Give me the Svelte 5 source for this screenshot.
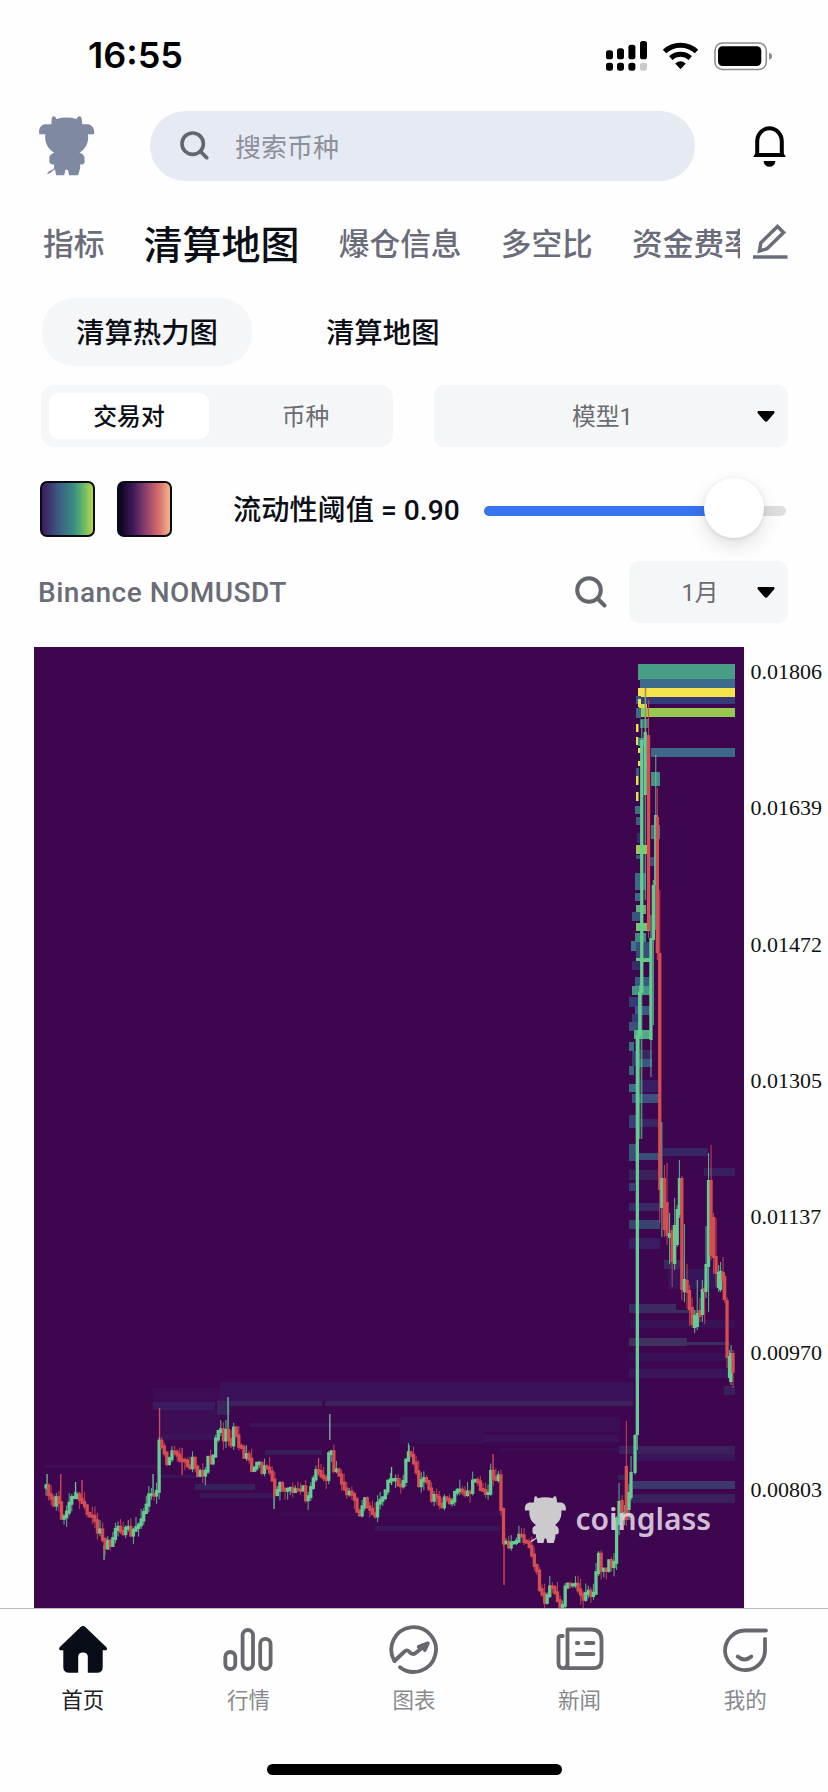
<script lang="ts">
	type Point = [number, number];
	type Band = [number, number, number, number, string];
	interface Candle {
		x: number;
		high: number;
		top: number;
		bottom: number;
		low: number;
		up: boolean;
	}

	const topics = ['指标', '清算地图', '爆仓信息', '多空比', '资金费率'];
	const prices = ['0.01806', '0.01639', '0.01472', '0.01305', '0.01137', '0.00970', '0.00803'];
	const navItems = ['首页', '行情', '图表', '新闻', '我的'];

	let topic = $state('清算地图');
	let nav = $state('首页');
	let threshold = $state(0.9);

	// close prices of the quiet part of the month, in chart units
	const closes: Point[] = [
		[45, 1487], [48, 1491], [52, 1503], [54, 1505], [57, 1496], [60, 1507], [62, 1522], [66, 1515],
		[68, 1508], [71, 1495], [75, 1496], [80, 1497], [85, 1507], [90, 1517], [93, 1515], [98, 1533],
		[101, 1528], [103, 1542], [104, 1552], [107, 1542], [110, 1547], [113, 1538], [117, 1528],
		[122, 1533], [127, 1525], [131, 1536], [136, 1527], [140, 1520], [145, 1510], [148, 1495],
		[152, 1492], [155, 1497], [157.5, 1490], [159, 1440], [163, 1448], [166, 1463], [168, 1464],
		[173, 1451], [177, 1457], [182, 1460], [186, 1462], [190, 1468], [193, 1458], [197, 1478],
		[200, 1473], [204, 1479], [207, 1458], [212, 1468], [215, 1440], [218, 1433], [221, 1430],
		[223, 1442], [227, 1427], [230, 1453], [234, 1428], [238, 1445], [242, 1450], [245, 1460],
		[248, 1452], [250, 1470], [255, 1468], [259, 1462], [261, 1477], [266, 1463], [269, 1478],
		[271, 1460], [273, 1495], [275, 1492], [280, 1485], [283, 1490], [290, 1487], [297, 1493],
		[303, 1488], [307, 1503], [311, 1488], [316, 1468], [320, 1475], [326, 1478], [328, 1466],
		[330, 1435], [333, 1473], [338, 1472], [343, 1488], [348, 1493], [352, 1492], [357, 1510],
		[361, 1514], [364, 1500], [368, 1507], [374, 1518], [377, 1505], [382, 1498], [387, 1485],
		[392, 1477], [397, 1483], [403, 1485], [407, 1450], [412, 1455], [415, 1467], [418, 1486],
		[423, 1475], [427, 1482], [432, 1500], [435, 1497], [442, 1507], [445, 1493], [451, 1506],
		[455, 1492], [458, 1487], [463, 1495], [470, 1493], [473, 1478], [477, 1480], [482, 1493],
		[488, 1492], [490, 1468], [494, 1480], [499, 1477], [501, 1512], [503, 1540], [508, 1545],
		[513, 1542], [520, 1537], [528, 1542], [532, 1558], [537, 1573], [540, 1593], [546, 1602],
		[548, 1590], [552, 1585], [555, 1595], [560, 1607], [563, 1607], [565, 1587], [570, 1583],
		[575, 1585], [580, 1590], [583, 1600], [587, 1592], [593, 1595], [596, 1572], [598, 1553],
		[602, 1572], [606, 1570], [608, 1560], [612, 1567], [615, 1560], [616, 1527], [618, 1502]
	];

	// the pump and what followed: x, high, body top, body bottom, low, rising
	const spike: [number, number, number, number, number, 0 | 1][] = [
		[619, 1483, 1501, 1525, 1535, 1], [622, 1495, 1500, 1517, 1520, 0], [624.5, 1505, 1512, 1520, 1525, 1],
		[626.3, 1421, 1466, 1520, 1526, 0], [629, 1484, 1492, 1510, 1520, 1], [631, 1456, 1472, 1498, 1500, 1],
		[635, 1434, 1435, 1473, 1475, 1], [637.3, 1030, 1035, 1435, 1450, 1], [639.7, 985, 992, 1036, 1139, 1],
		[641.7, 720, 740, 993, 1139, 1], [645.2, 690, 732, 795, 900, 1], [648.5, 700, 735, 930, 938, 0],
		[650.9, 915, 938, 1040, 1077, 1], [653.3, 880, 885, 940, 1025, 1], [655.7, 755, 815, 885, 930, 1],
		[657.3, 788, 817, 953, 960, 0], [659.7, 890, 953, 1190, 1223, 0], [661.8, 1122, 1178, 1208, 1237, 1],
		[664.4, 1165, 1178, 1230, 1237, 0], [667, 1163, 1202, 1236, 1245, 0], [669.5, 1213, 1233, 1238, 1264, 1],
		[672.1, 1225, 1230, 1262, 1287, 0], [674.6, 1198, 1225, 1264, 1270, 1], [677.2, 1205, 1209, 1245, 1247, 1],
		[679.4, 1160, 1178, 1215, 1218, 1], [681.8, 1176, 1178, 1290, 1300, 0], [684.4, 1224, 1279, 1292, 1302, 1],
		[687, 1264, 1280, 1293, 1309, 0], [689.5, 1285, 1290, 1310, 1326, 0], [692.1, 1298, 1307, 1325, 1328, 0],
		[694.6, 1310, 1315, 1328, 1333, 1], [697.2, 1280, 1313, 1327, 1330, 1], [699.8, 1298, 1310, 1317, 1322, 0],
		[702.3, 1280, 1289, 1315, 1322, 1], [704.6, 1284, 1288, 1292, 1324, 0], [706, 1226, 1264, 1292, 1298, 1],
		[708.5, 1153, 1180, 1267, 1312, 1], [711, 1145, 1180, 1256, 1260, 0], [713.5, 1213, 1217, 1258, 1274, 0],
		[716, 1218, 1256, 1274, 1287, 0], [718.6, 1265, 1272, 1288, 1292, 1], [720.5, 1262, 1271, 1290, 1292, 1],
		[723, 1257, 1272, 1281, 1300, 0], [724.6, 1273, 1276, 1300, 1303, 0], [727, 1297, 1300, 1358, 1368, 0],
		[729.5, 1350, 1356, 1378, 1382, 1], [731, 1345, 1353, 1382, 1385, 1], [733, 1350, 1353, 1373, 1388, 0]
	];

	// single long wicks: x, y from, y to, colour
	const wicks: [number, number, number, string][] = [
		[47, 1474, 1490, '#64cb96'], [60.7, 1474, 1500, '#d94c55'], [75.5, 1482, 1498, '#64cb96'],
		[82, 1480, 1500, '#d94c55'], [104, 1545, 1560, '#64cb96'], [153, 1474, 1495, '#64cb96'],
		[159.5, 1408, 1440, '#d94c55'], [182, 1448, 1475, '#d94c55'], [228, 1397, 1430, '#64cb96'],
		[274, 1490, 1509, '#64cb96'], [318.5, 1458, 1475, '#d94c55'], [329.8, 1414, 1440, '#7fb6ad'],
		[391.5, 1467, 1485, '#64cb96'], [409, 1445, 1460, '#64cb96'], [493, 1454, 1480, '#d94c55'],
		[504, 1540, 1585, '#d94c55'], [645.5, 688, 735, '#d94c55']
	];

	// liquidation levels: x, y, width, height, colour
	const bands: Band[] = [
		[45, 1465, 115, 3, '#3e0f55'], [153, 1388, 70, 15, '#3e0c55'], [153, 1402, 62, 8, '#3c1a5f'],
		[220, 1382, 413, 19, '#3b125a'], [217, 1401, 105, 5, '#3c215d'], [325, 1401, 308, 5, '#3c215d'],
		[158, 1410, 62, 30, '#3d0d55'], [217, 1405, 13, 10, '#39245f'], [250, 1423, 150, 4, '#3b145a'],
		[400, 1417, 220, 15, '#3b0e56'], [400, 1432, 84, 12, '#3b0f57'], [484, 1435, 135, 7, '#3b1158'],
		[163, 1434, 57, 6, '#3c1258'], [265, 1450, 57, 5, '#391d5b'], [195, 1484, 60, 6, '#37215c'],
		[200, 1493, 75, 5, '#3a1557'], [280, 1512, 220, 4, '#3c0d55'], [375, 1526, 125, 5, '#3a1559'],
		[160, 1475, 40, 3, '#3a1659'], [500, 1448, 118, 3, '#3c0d56'],
		[638, 664, 97, 16, '#479d86'], [640, 679, 95, 9, '#3c6b8c'], [638, 688, 97, 9, '#f4e34c'],
		[638, 697, 97, 7, '#363c78'], [640, 708, 95, 9, '#97c951'], [651, 748, 84, 9, '#3d6887'],
		[636, 696, 5, 8, '#355a82'], [638, 699, 3, 8, '#efe44c'], [639, 704, 8, 4, '#d2db4f'],
		[636, 708, 5, 10, '#3d6887'], [640, 719, 9, 9, '#3c7b84'], [636, 724, 2.5, 8, '#eadf4d'],
		[636, 737, 2.5, 8, '#eadf4d'], [638, 738, 7, 8, '#3c8788'], [638, 748, 3, 5, '#eadf4d'],
		[638, 761, 3, 5, '#eadf4d'], [636, 768, 3, 8, '#3b5c80'], [636, 776, 2.5, 9, '#eadf4d'],
		[651, 772, 9, 14, '#478e87'], [636, 792, 2.5, 9, '#eadf4d'], [635, 806, 6, 8, '#3d7182'],
		[636, 817, 4, 8, '#3d5c80'], [651, 825, 9, 14, '#3f7581'], [637, 833, 4, 10, '#372b6c'],
		[636, 845, 11, 9, '#9fc852'], [636, 855, 5, 4, '#385b80'], [650, 857, 8, 9, '#3b517d'],
		[635, 873, 11, 17, '#3d6986'], [635, 893, 5, 8, '#3d6986'], [636, 905, 10, 9, '#66ae79'],
		[632, 912, 9, 9, '#3b547b'], [636, 923, 14, 8, '#78c36e'], [635, 933, 11, 9, '#438b7f'],
		[631, 941, 6, 10, '#3f7685'], [636, 942, 16, 16, '#394c7c'], [636, 958, 16, 4, '#61c979'],
		[632, 961, 9, 9, '#372b6c'], [635, 977, 16, 9, '#395a80'], [632, 986, 20, 9, '#459783'],
		[629, 997, 10, 10, '#363c78'], [635, 1006, 15, 9, '#3e5887'], [632, 1014, 7, 12, '#343c79'],
		[629, 1022, 9, 9, '#3b527f'], [634, 1030, 17, 9, '#4eab85'], [629, 1042, 5, 9, '#3e6e83'],
		[632, 1051, 9, 15, '#383b74'], [639, 1050, 13, 9, '#392664'], [639, 1059, 13, 8, '#38587f'],
		[629, 1066, 5, 9, '#3d6282'], [629, 1084, 7, 8, '#3c6f89'], [640, 1080, 18, 12, '#391d63'],
		[632, 1094, 27, 9, '#3c527e'], [629, 1115, 7, 13, '#393e78'], [640, 1119, 19, 8, '#3b2464'],
		[629, 1144, 7, 17, '#38527c'], [632, 1153, 27, 7, '#394d76'], [663, 1148, 45, 8, '#362562'],
		[629, 1170, 30, 10, '#3b205d'], [629, 1183, 6, 8, '#383e70'], [629, 1203, 31, 8, '#3a2964'],
		[629, 1220, 31, 9, '#3c426f'], [629, 1238, 31, 11, '#3b1c60'], [704, 1168, 31, 8, '#391e60'],
		[664, 1260, 20, 9, '#3a285e'], [668, 1269, 56, 20, '#38145c'], [629, 1304, 47, 9, '#3c2b62'],
		[676, 1310, 30, 3, '#38305f'], [630, 1320, 105, 8, '#391157'], [629, 1338, 58, 8, '#3e315e'],
		[687, 1342, 43, 3, '#38305d'], [629, 1353, 102, 8, '#391058'], [629, 1369, 102, 9, '#3b145a'],
		[724, 1386, 11, 9, '#37205b'], [619, 1446, 116, 8, '#3c205e'], [635, 1454, 100, 7, '#3a155b'],
		[633, 1481, 102, 8, '#3c386e'], [629, 1494, 106, 9, '#3b205e'], [618, 1475, 8, 5, '#37205b']
	];

	function closeAt(x: number) {
		const next = closes.findIndex((p) => p[0] > x);
		if (next < 1) return next === 0 ? closes[0][1] : closes[closes.length - 1][1];
		const [x0, y0] = closes[next - 1];
		const [x1, y1] = closes[next];
		return y0 + ((x - x0) / (x1 - x0)) * (y1 - y0);
	}

	function noise(i: number) {
		const n = Math.sin(i * 12.9898) * 43758.5453;
		return n - Math.floor(n);
	}

	function buildCandles() {
		const list: Candle[] = [];
		let open = closes[0][1];
		for (let i = 0; 46 + i * 2.57 < 618; i++) {
			const x = 46 + i * 2.57;
			const close = closeAt(x) + (noise(i) - 0.5) * 5;
			const top = Math.min(open, close) - 1.5;
			const bottom = Math.max(open, close) + 1.5;
			list.push({
				x,
				top,
				bottom,
				high: top - noise(i + 300) ** 2 * 10,
				low: bottom + noise(i + 700) ** 2 * 9,
				up: close < open
			});
			open = close;
		}
		for (const [x, high, top, bottom, low, up] of spike) {
			list.push({ x, high, top, bottom, low, up: up === 1 });
		}
		return list;
	}

	const candles = buildCandles();
</script>

{#snippet bull()}
	<path
		d="M75 131H57C54 116 60 103 75 101H93C95 95 92 82 97 78C103 75 106 79 108 85Q139 76 170 85C172 78 176 75 182 78C187 84 185 95 187 101H204C218 103 225 116 222 131H204C206 155 200 172 178 187C188 189 196 199 193 208C197 218 189 224 180 222C182 235 176 245 174 255H147L143 238H136L132 255H108L104 237L90 248L80 252L84 244L101 235L102 222C92 225 84 216 88 207C84 199 92 189 103 187C80 173 73 155 75 131Z"
	/>
{/snippet}

{#snippet magnifier()}
	<svg class="magnifier" viewBox="0 0 32 32">
		<circle cx="14" cy="14" r="11.8" />
		<path d="M22.5 22.5L29.5 29.5" />
	</svg>
{/snippet}

{#snippet caret()}
	<svg class="caret" viewBox="0 0 18 11"><path d="M1.5 0H16.5Q18.5 .6 17 2.4L10.5 10Q9 11.6 7.5 10L1 2.4Q-.5 .6 1.5 0Z" /></svg>
{/snippet}

<div class="page">
	<div class="status">
		<span class="clock">16:55</span>
		<svg class="status-icons" viewBox="606 39 168 32">
			<rect x="606" y="49.3" width="7" height="9" rx="2.6" />
			<rect x="617" y="47.3" width="7" height="11" rx="2.6" />
			<rect x="628.4" y="43.7" width="7" height="14.6" rx="2.6" />
			<rect x="640" y="40" width="7" height="18.3" rx="2.6" />
			<rect x="606" y="61.7" width="7" height="8" rx="2.6" />
			<rect x="617" y="61.7" width="7" height="8" rx="2.6" />
			<rect x="628.4" y="61.7" width="7" height="8" rx="2.6" />
			<rect x="640" y="61.7" width="7" height="8" rx="2.6" fill="#c9c9c9" />
			<path d="M664.5 50.5A23.5 23.5 0 0 1 696.5 50.5" class="wave" />
			<path d="M670.7 57A15 15 0 0 1 690.3 57" class="wave" />
			<path d="M680.5 68.3L675.2 62.6Q680.5 58 685.8 62.6Z" />
			<rect x="715" y="42" width="51.3" height="26.5" rx="7.5" fill="none" stroke="#8d8d8d" stroke-width="1.6" />
			<rect x="718" y="45.2" width="43.3" height="19.8" rx="4.5" />
			<path d="M769 51.7Q772 52.5 772 55.2T769 58.7Z" fill="#8d8d8d" />
		</svg>
	</div>

	<header>
		<svg class="logo" viewBox="53 76 172 181">{@render bull()}</svg>
		<div class="search">
			{@render magnifier()}
			<span>搜索币种</span>
		</div>
		<svg class="bell" viewBox="0 0 33 41">
			<path d="M4.2 28.8V15.5A12.3 13.2 0 0 1 28.8 15.5V28.8" fill="none" stroke="#000" stroke-width="4" />
			<path d="M2.5 27H30.5L32.8 31H.2Z" />
			<path d="M10.5 35H22.5Q21.5 40.8 16.5 40.8T10.5 35Z" />
		</svg>
	</header>

	<div class="topics">
		<nav>
			{#each topics as name}
				<button type="button" class={`topic ${topic === name && 'topic-active'}`} onclick={() => (topic = name)}>
					{name}
				</button>
			{/each}
		</nav>
		<svg class="pencil" viewBox="0 0 35 36">
			<path d="M6.5 27L7.8 18.8L24.5 2.4L30.6 8.4L14 24.8Z" />
			<path d="M0 33H34.5" />
		</svg>
	</div>

	<div class="maps">
		<span class="map map-active">清算热力图</span>
		<span class="map">清算地图</span>
	</div>

	<div class="filters">
		<div class="segment">
			<span class="segment-active">交易对</span>
			<span>币种</span>
		</div>
		<div class="select model"><span>模型1</span>{@render caret()}</div>
	</div>

	<div class="liquidity">
		<span class="swatch viridis"></span>
		<span class="swatch magma"></span>
		<span class="threshold">流动性阈值 = {threshold.toFixed(2)}</span>
		<div class="slider">
			<div class="slider-fill"></div>
			<div class="thumb"></div>
		</div>
	</div>

	<div class="pair">
		<span class="symbol">Binance NOMUSDT</span>
		{@render magnifier()}
		<div class="select period"><span>1月</span>{@render caret()}</div>
	</div>

	<div class="chart">
		<svg class="plot" viewBox="34 647 709.5 961">
			{#each bands as [x, y, width, height, fill]}
				<rect {x} {y} {width} {height} {fill} />
			{/each}
			{#each wicks as [x, from, to, fill]}
				<rect x={x - 0.6} y={from} width="1.3" height={to - from} {fill} />
			{/each}
			{#each candles as c}
				<g class={c.up ? 'up' : 'down'}>
					<rect x={c.x - 0.5} y={c.high} width="1.1" height={c.low - c.high} opacity="0.8" />
					<rect x={c.x - 1.6} y={c.top} width="3.3" height={c.bottom - c.top} />
				</g>
			{/each}
			<svg class="mark" x="524" y="1496" width="42.5" height="47.5" viewBox="53 76 172 181" preserveAspectRatio="none">
				{@render bull()}
			</svg>
			<text class="brand" x="575.5" y="1529.5" textLength="135.5">coinglass</text>
		</svg>
		<div class="axis">
			{#each prices as price}
				<span>{price}</span>
			{/each}
		</div>
	</div>

	<footer>
		{#each navItems as name, i}
			<button type="button" class={`tab ${nav === name && 'tab-active'}`} onclick={() => (nav = name)}>
				<svg viewBox="0 0 50 50">
					{#if i === 0}
						<path
							class="solid"
							d="M22.4 2.2Q25 0 27.6 2.2L48.4 22.2Q50 24 48.3 25.2H44.7V42Q44.7 47.8 39 47.8H29.8V31.5Q29.5 27.5 25 27.5T20.2 31.5V47.8H11.5Q5.3 47.8 5.3 42V25.2H2Q.2 24 1.6 22.2Z"
						/>
					{:else if i === 1}
						<rect x="2.3" y="27" width="10" height="17" rx="5" />
						<rect x="19.6" y="5" width="10.4" height="39" rx="5.2" />
						<rect x="37.2" y="13.8" width="10.4" height="30.2" rx="5.2" />
					{:else if i === 2}
						<path d="M5.5 36A22.3 22.3 0 1 1 11 42.2" />
						<path d="M5.5 36L15.5 26.5Q18 24 20.5 27T26 28.5L38.5 18.8M29.7 21.8L38.8 18.4L35.8 25" />
					{:else if i === 3}
						<path d="M12.5 4.5H36Q46.5 4.5 46.5 15V35Q46.5 43.2 38 43.2H12.5ZM7.8 11H5.5Q3.5 11 3.5 13V38Q3.5 43.2 8.2 43.2Q12.5 43.2 12.5 38" />
						<path d="M21.8 18H23.4M31 18H38.5M21.8 29H38.5" />
					{:else}
						<path d="M46 5.5H24.5A20 20 0 1 0 45 25V14" />
						<path d="M17.7 31.5Q24.5 37.5 31.4 31.5" />
					{/if}
				</svg>
				<span>{name}</span>
			</button>
		{/each}
	</footer>
	<div class="home-bar"></div>
</div>

<style>
	:global(body) {
		background: #fefefe;
	}

	.page {
		display: flex;
		flex-direction: column;
		width: 828px;
		height: 1792px;
		overflow: hidden;
		background: #fefefe;
		color: #0b0e16;
		font-family: Roboto, 'Noto Sans CJK SC', sans-serif;
		font-weight: 500;
	}

	svg {
		display: block;
		flex: none;
	}

	button {
		padding: 0;
		border: 0;
		background: none;
		color: inherit;
		font: inherit;
	}

	.status {
		display: flex;
		align-items: center;
		justify-content: space-between;
		height: 111px;
		padding: 0 54px 0 88px;
		box-sizing: border-box;
	}

	.clock {
		padding-bottom: 2px;
		font-family: Inter, sans-serif;
		font-size: 36px;
		font-weight: 600;
		color: #000;
	}

	.status-icons {
		width: 168px;
		height: 32px;
	}

	.wave {
		fill: none;
		stroke: #000;
		stroke-width: 5;
	}

	header {
		display: flex;
		align-items: center;
		height: 70px;
		padding: 0 42px 0 38px;
	}

	.logo {
		width: 57px;
		height: 60px;
		fill: #7f89a2;
	}

	.search {
		display: flex;
		align-items: center;
		gap: 26px;
		width: 545px;
		height: 70px;
		margin: 0 auto 0 55px;
		padding: 0 0 2px 30px;
		box-sizing: border-box;
		border-radius: 35px;
		background: #e6eaf3;
		color: #8c909b;
		font-size: 26px;
		font-weight: 400;
	}

	.magnifier {
		width: 32px;
		height: 32px;
		fill: none;
		stroke: #63666b;
		stroke-width: 4;
		stroke-linecap: round;
	}

	.search .magnifier {
		width: 29px;
		height: 29px;
	}

	.bell {
		width: 33px;
		height: 41px;
	}

	.topics {
		display: flex;
		align-items: center;
		height: 117px;
		padding-left: 43px;
	}

	nav {
		display: flex;
		align-items: center;
		gap: 39.2px;
		width: 697px;
		height: 60px;
		margin-top: 4px;
		overflow: hidden;
	}

	.topic {
		flex: none;
		color: #6a6c7a;
		font-size: 30.7px;
		white-space: nowrap;
	}

	.topic-active {
		color: #0b0e16;
		font-size: 39px;
	}

	.pencil {
		width: 35px;
		height: 36px;
		margin: 4px 0 0 13px;
		fill: none;
		stroke: #6a6c7a;
		stroke-width: 3.5;
	}

	.maps {
		display: flex;
		gap: 40px;
		height: 68px;
		padding-left: 42px;
	}

	.map {
		height: 68px;
		padding: 0 34px;
		box-sizing: border-box;
		border-radius: 32px;
		font-size: 28.4px;
		line-height: 72px;
	}

	.map-active {
		background: #f4f6f8;
	}

	.filters {
		display: flex;
		gap: 41px;
		height: 62px;
		margin: 19px 40px 0 41px;
		color: #6a6c72;
		font-size: 23.8px;
		font-weight: 400;
	}

	.segment {
		display: grid;
		grid-template-columns: 160px 1fr;
		grid-template-rows: 46px;
		width: 352px;
		padding: 8px;
		box-sizing: border-box;
		border-radius: 13px;
		background: #f4f6f8;
		line-height: 48px;
		text-align: center;
	}

	.segment span:last-child {
		margin-left: 17px;
	}

	.segment .segment-active {
		border-radius: 9px;
		background: #fff;
		color: #0b0e16;
		font-weight: 500;
	}

	.select {
		display: flex;
		align-items: center;
		height: 62px;
		padding-right: 13px;
		box-sizing: border-box;
		border-radius: 10px;
		background: #f4f6f8;
		color: #6a6c72;
		font-size: 23.8px;
		font-weight: 400;
	}

	.select span {
		flex: 1;
		padding-bottom: 3px;
		text-align: center;
	}

	.model {
		width: 354px;
	}

	.model span {
		padding-left: 14px;
	}

	.caret {
		width: 18px;
		height: 11px;
		fill: #000;
	}

	.liquidity {
		display: flex;
		align-items: center;
		height: 62px;
		margin: 31px 42px 0 40px;
	}

	.swatch {
		width: 55px;
		height: 56px;
		margin-right: 22px;
		box-sizing: border-box;
		border: 2px solid #080b12;
		border-radius: 7px;
	}

	.viridis {
		background: linear-gradient(90deg, #3d1b5b, #3b5d83 33%, #398c86 62%, #62b66b 80%, #b9d64b);
	}

	.magma {
		background: linear-gradient(90deg, #08051c, #3f1a5c 28%, #95436f 55%, #d96c6a 78%, #efb68f);
	}

	.threshold {
		width: 251px;
		margin-left: 39px;
		padding-bottom: 4px;
		font-size: 28.2px;
		white-space: nowrap;
	}

	.slider {
		position: relative;
		flex: 1;
		height: 10px;
		margin-top: 3px;
		border-radius: 5px;
		background: #dedede;
	}

	.slider-fill {
		width: 82%;
		height: 10px;
		border-radius: 5px;
		background: #3874ee;
	}

	.thumb {
		position: absolute;
		top: -28px;
		left: 220px;
		width: 60px;
		height: 60px;
		border-radius: 50%;
		background: #fff;
		box-shadow:
			0 8px 20px rgb(0 0 0 / 12%),
			0 1px 4px rgb(0 0 0 / 10%);
	}

	.pair {
		display: flex;
		align-items: center;
		height: 62px;
		margin: 21px 40px 24px 38px;
	}

	.symbol {
		flex: 1;
		color: #6a6c76;
		font-size: 28px;
		letter-spacing: 0.5px;
	}

	.period {
		width: 159px;
		margin-left: 22px;
	}

	.period span {
		padding-left: 14px;
	}

	.chart {
		display: flex;
		height: 961px;
		padding-left: 34px;
	}

	.plot {
		width: 709.5px;
		height: 961px;
		background: #3d064f;
	}

	.up {
		fill: #64cb91;
	}

	.down {
		fill: #d54c51;
	}

	.mark {
		fill: #cdcacd;
	}

	.brand {
		fill: #e6d8e8;
		fill-opacity: 0.9;
		font-family: 'Noto Sans', sans-serif;
		font-size: 30px;
		font-weight: 600;
	}

	.axis {
		display: flex;
		flex-direction: column;
		gap: 111.3px;
		padding: 12px 0 0 7px;
		color: #111;
		font-family: 'Liberation Serif', serif;
		font-size: 22px;
		font-weight: 400;
		line-height: 25px;
	}

	footer {
		display: grid;
		grid-template-columns: repeat(5, 1fr);
		height: 156px;
		box-sizing: border-box;
		border-top: 1px solid #bcbcbc;
		background: #fefefe;
	}

	.tab {
		display: flex;
		flex-direction: column;
		align-items: center;
		gap: 8px;
		padding-top: 16px;
		color: #88898d;
		font-size: 21.5px;
		font-weight: 400;
	}

	.tab svg {
		width: 50px;
		height: 50px;
		fill: none;
		stroke: #66686d;
		stroke-width: 3.8;
		stroke-linecap: round;
		stroke-linejoin: round;
	}

	.tab .solid {
		fill: #080d17;
		stroke: none;
	}

	.tab-active {
		color: #202226;
	}

	.home-bar {
		flex: none;
		width: 295px;
		height: 11px;
		margin-left: 267px;
		border-radius: 6px;
		background: #000;
	}
</style>
